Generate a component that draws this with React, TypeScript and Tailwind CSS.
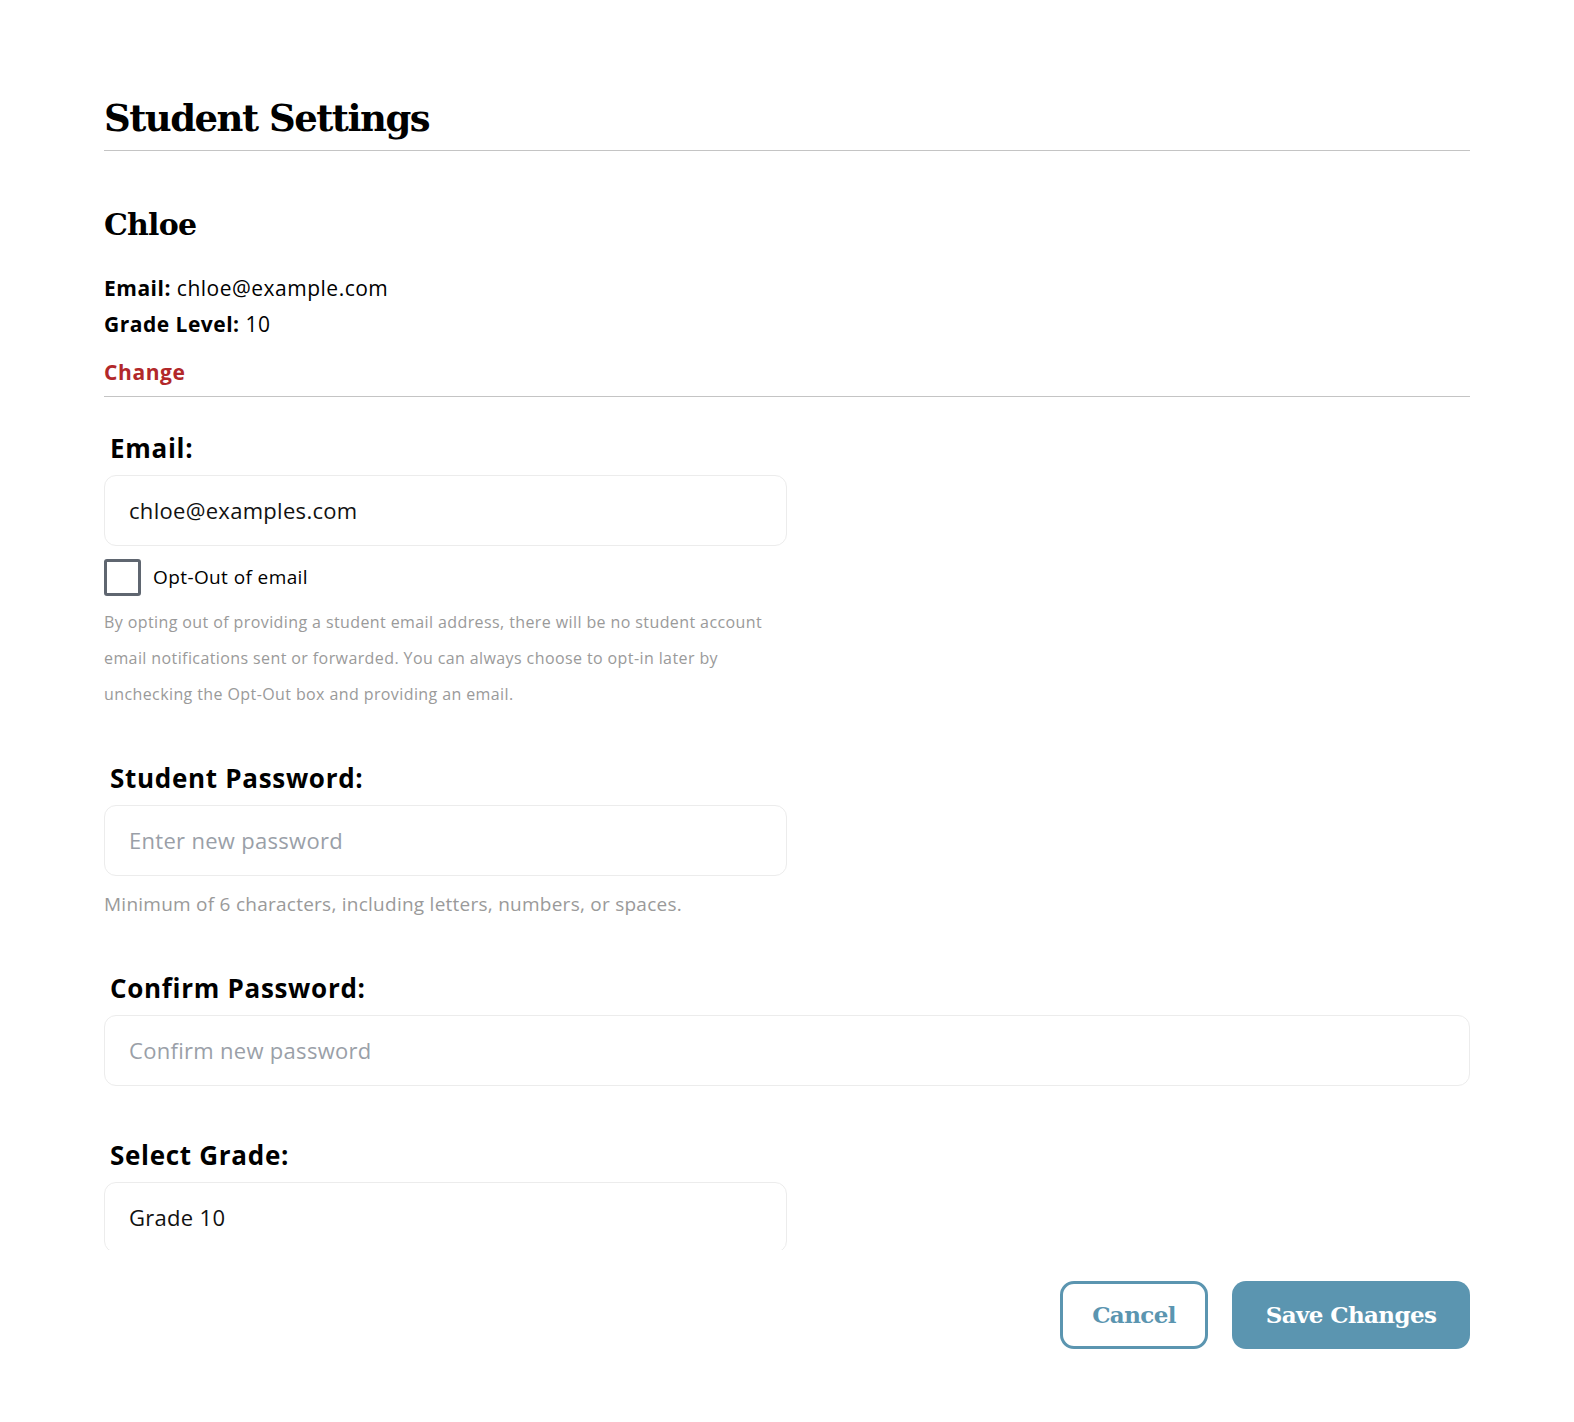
const serif = "font-['DejaVu_Serif',serif]";

const Field = ({
  label,
  value,
  placeholder,
  full,
  clip,
}: {
  label: string;
  value?: string;
  placeholder?: string;
  full?: boolean;
  clip?: boolean;
}) => (
  <div>
    <div className="pl-[6px] text-[26px] leading-[32px] font-bold text-black tracking-[0.7px]">{label}</div>
    <div className={`mt-[11px] ${clip ? "h-[68px] overflow-hidden" : ""}`}>
      <div
        className={`h-[71px] ${full ? "w-full" : "w-[683px]"} rounded-[12px] border border-[#ececec] flex items-center px-[24px] text-[22px] tracking-[0.3px]`}
      >
        {value ? (
          <span className="text-[#111]">{value}</span>
        ) : (
          <span className="text-[#9a9fa8]">{placeholder}</span>
        )}
      </div>
    </div>
  </div>
);

export default function App() {
  return (
    <div className="h-[1422px] overflow-hidden bg-white font-['Open_Sans','Liberation_Sans',sans-serif] text-black">
      <div className="mx-[104px]">
        {/* Title */}
        <h1
          className={`${serif} pt-[94px] pb-[8px] border-b border-[#c4c4c4] text-[37px] leading-[48px] font-bold tracking-[-1.5px]`}
        >
          Student Settings
        </h1>

        {/* Student info */}
        <div className="border-b border-[#c4c4c4] pb-[6px] pt-[52px]">
          <h2 className={`${serif} text-[30px] leading-[44px] font-bold tracking-[-0.8px]`}>Chloe</h2>
          <div className="mt-[23px] text-[21px] leading-[36px] tracking-[0.5px]">
            <div>
              <span className="font-bold">Email:</span> chloe@example.com
            </div>
            <div>
              <span className="font-bold">Grade Level:</span> 10
            </div>
          </div>
          <button className="mt-[12px] block text-[21px] leading-[36px] font-bold tracking-[0.6px] text-[#b2282a]">
            Change
          </button>
        </div>

        {/* Email */}
        <div className="mt-[35px]">
          <Field label="Email:" value="chloe@examples.com" />
          <label className="mt-[13px] flex items-center gap-[12px]">
            <span className="w-[37px] h-[37px] rounded-[3px] border-[3px] border-[#5f6670]" />
            <span className="text-[19px] tracking-[0.4px]">Opt-Out of email</span>
          </label>
          <p className="mt-[8px] w-[683px] text-[16px] leading-[36px] tracking-[0.4px] text-[#9a9a9a]">
            By opting out of providing a student email address, there will be no student account email
            notifications sent or forwarded. You can always choose to opt-in later by unchecking the
            Opt-Out box and providing an email.
          </p>
        </div>

        {/* Password */}
        <div className="mt-[50px]">
          <Field label="Student Password:" placeholder="Enter new password" />
          <p className="mt-[14px] text-[19px] leading-[28px] tracking-[0.25px] text-[#9a9a9a]">
            Minimum of 6 characters, including letters, numbers, or spaces.
          </p>
        </div>

        <div className="mt-[54px]">
          <Field label="Confirm Password:" placeholder="Confirm new password" full />
        </div>

        {/* Grade */}
        <div className="mt-[53px]">
          <Field label="Select Grade:" value="Grade 10" clip />
        </div>

        {/* Actions */}
        <div className="mt-[31px] flex justify-end gap-[24px]">
          <button
            className={`${serif} w-[148px] h-[68px] rounded-[14px] border-[3px] border-[#5b95b0] text-[#5b95b0] text-[23px] font-bold tracking-[-0.6px]`}
          >
            Cancel
          </button>
          <button
            className={`${serif} w-[238px] h-[68px] rounded-[14px] bg-[#5b95b0] text-white text-[23px] font-bold tracking-[-0.6px]`}
          >
            Save Changes
          </button>
        </div>
      </div>
    </div>
  );
}
